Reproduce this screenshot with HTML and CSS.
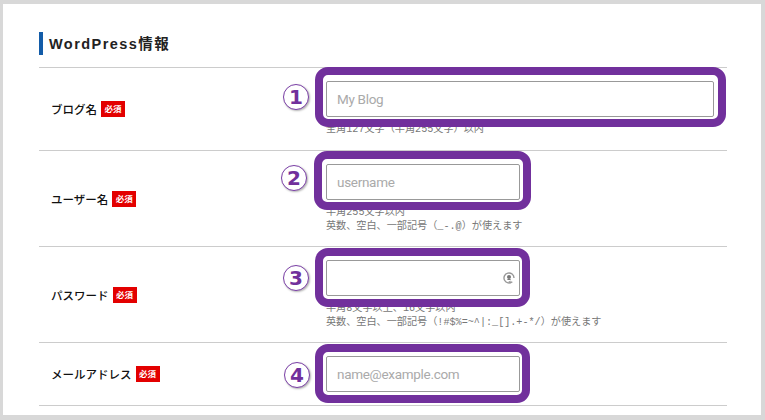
FILE: index.html
```
<!DOCTYPE html>
<html lang="ja">
<head>
<meta charset="utf-8">
<title>WordPress情報</title>
<link rel="stylesheet" href="styles.css">
</head>
<body>
<main class="panel">
  <h2 class="title">WordPress情報</h2>
  <div class="rows">
    <section class="row row-even">
      <div class="label"><span>ブログ名</span><em class="badge">必須</em></div>
      <div class="field">
        <div class="box box-wide">
          <input class="input" type="text" placeholder="My Blog">
          <span class="frame frame-1"></span>
          <span class="mark mark-1">1</span>
        </div>
        <p class="help">全角127文字（半角255文字）以内</p>
      </div>
    </section>
    <section class="row">
      <div class="label"><span>ユーザー名</span><em class="badge">必須</em></div>
      <div class="field">
        <div class="box">
          <input class="input" type="text" placeholder="username">
          <span class="frame frame-2"></span>
          <span class="mark mark-2">2</span>
        </div>
        <p class="help">半角255文字以内<br>英数、空白、一部記号（_-.@）が使えます</p>
      </div>
    </section>
    <section class="row">
      <div class="label"><span>パスワード</span><em class="badge">必須</em></div>
      <div class="field">
        <div class="box">
          <input class="input" type="text">
          <svg class="pw-icon" viewBox="0 0 12 12" aria-hidden="true">
            <path d="M9.3 9.7A5 5 0 1 1 11 6" fill="none" stroke="#999" stroke-width="1.4"/>
            <path d="M5 10 7.6 8.6 7.6 11.6Z" fill="#999"/>
            <circle cx="6" cy="5" r="2" fill="#777"/>
            <path d="M4 8C4.2 6.6 7.8 6.6 8 8Z" fill="#777"/>
          </svg>
          <span class="frame frame-3"></span>
          <span class="mark mark-3">3</span>
        </div>
        <p class="help">半角8文字以上、16文字以内<br>英数、空白、一部記号（!#$%=~^|:_[].+-*/）が使えます</p>
      </div>
    </section>
    <section class="row row-even">
      <div class="label"><span>メールアドレス</span><em class="badge">必須</em></div>
      <div class="field">
        <div class="box">
          <input class="input" type="text" placeholder="name@example.com">
          <span class="frame frame-4"></span>
          <span class="mark mark-4">4</span>
        </div>
      </div>
    </section>
  </div>
</main>
</body>
</html>
```
FILE: styles.css
```
* { box-sizing: border-box; }
html, body { margin: 0; height: 100%; overflow: hidden; }
body {
  background: #d8d8d8;
  padding: 4px 4px 5px 3px;
  font-family: "Liberation Sans", "Noto Sans CJK JP", sans-serif;
  color: #222;
}
.panel {
  background: #fff;
  height: 411px;
  padding: 28px 34px 0 36px;
}
.title {
  margin: 0 0 12px;
  height: 23px;
  border-left: 4px solid #135ca8;
  padding-left: 6px;
  font-size: 14.5px;
  line-height: 24px;
  font-weight: 700;
  letter-spacing: 1.45px;
  color: #222;
}
.rows { border-top: 1px solid #ccc; }
.row {
  display: grid;
  grid-template-columns: 287px 1fr;
  align-items: center;
  border-bottom: 1px solid #ccc;
  padding: 13px 0 12px;
}
.row-even { padding-bottom: 13px; }
.label {
  display: flex;
  align-items: center;
  gap: 4px;
  padding-left: 12px;
  font-size: 11.5px;
  font-weight: 500;
  color: #111;
}
.badge {
  display: block;
  height: 16px;
  padding: 0 3.5px;
  background: #e30000;
  color: #fff;
  font-size: 8.5px;
  line-height: 16px;
  font-weight: 700;
  font-style: normal;
}
.field { align-self: start; }
.box { position: relative; width: 194px; height: 36px; }
.box-wide { width: 388px; }
.input {
  display: block;
  width: 100%;
  height: 36px;
  border: 1px solid #999;
  border-radius: 2px;
  padding: 0 10px;
  background: #fff;
  font-family: Roboto, "Liberation Sans", sans-serif;
  font-size: 13.5px;
  letter-spacing: -.3px;
  outline: 0;
}
.input::placeholder { color: #aaa; opacity: 1; }
.help {
  margin: 6px 0 0;
  font-family: "Liberation Mono", "Noto Sans CJK JP", monospace;
  font-size: 10.15px;
  line-height: 14px;
  color: #777;
}
.frame {
  position: absolute;
  border: 8px solid #71309c;
  border-radius: 13px;
  pointer-events: none;
}
.frame-1 { top: -14px; bottom: -10px; left: -11px; right: -12px; }
.frame-2 { top: -13px; bottom: -10px; left: -12px; right: -11px; }
.frame-3 { top: -12px; bottom: -11px; left: -11px; right: -10px; }
.frame-4 { top: -12px; bottom: -11px; left: -11px; right: -10px; }
.mark {
  position: absolute;
  width: 26px;
  height: 26px;
  display: flex;
  align-items: center;
  justify-content: center;
  border: 1.5px solid #7a3ea6;
  border-radius: 50%;
  background: #fff;
  box-shadow: 1px 1px 2px rgba(0, 0, 0, .3);
  color: #71309c;
  font-family: "DejaVu Sans", sans-serif;
  font-size: 20px;
  font-weight: 700;
  line-height: 1;
}
.mark-1 { left: -43px; top: 3px; }
.mark-2 { left: -45px; top: 1px; }
.mark-3 { left: -43px; top: 5px; }
.mark-4 { left: -42px; top: 6px; }
.pw-icon {
  position: absolute;
  right: 5px;
  top: 12px;
  width: 12px;
  height: 12px;
}
```
